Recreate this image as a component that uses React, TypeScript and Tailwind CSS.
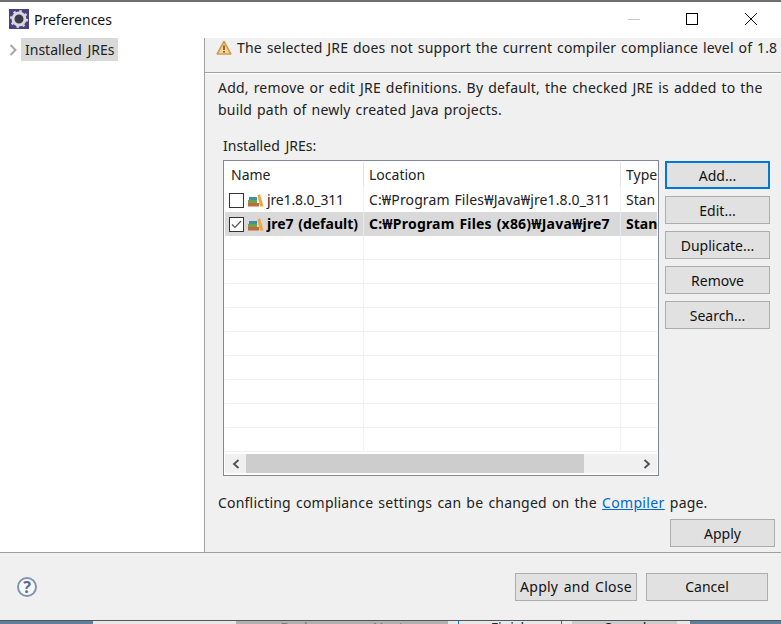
import React from "react";

const font = "font-['Noto_Sans','Noto_Sans_CJK_KR',sans-serif]";

const PushButton: React.FC<{ label: string; focused?: boolean; className?: string }> = ({ label, focused, className }) => (
  <button
    className={
      "flex items-center justify-center bg-[#e1e1e1] text-[14px] text-[#111] " +
      (focused ? "border-2 border-[#0078d7] " : "border border-[#adadad] ") +
      (className ?? "")
    }
  >
    {label}
  </button>
);

const JreIcon = () => (
  <svg width="16" height="13" viewBox="0 0 16 13" className="shrink-0">
    <rect x="1" y="3" width="8" height="3" fill="#3f8f9c" />
    <rect x="0" y="6" width="9" height="3" fill="#6da34d" />
    <rect x="0" y="9" width="11" height="3.5" fill="#c0693c" />
    <path d="M9.5 1.5 L12 0 L15.5 12.5 L12 12.5 Z" fill="#eaa83f" />
  </svg>
);

type Row = { name: string; location: string; type: string; checked?: boolean };

const rows: Row[] = [
  { name: "jre1.8.0_311", location: "C:₩Program Files₩Java₩jre1.8.0_311", type: "Stan" },
  { name: "jre7 (default)", location: "C:₩Program Files (x86)₩Java₩jre7", type: "Stan", checked: true },
];

const TableRow: React.FC<{ row?: Row }> = ({ row }) => (
  <div
    className={
      "flex h-[24px] shrink-0 items-center text-[14px] " +
      (row?.checked ? "bg-[#d9d9d9] font-bold text-black" : "text-[#222] ") +
      (row ? "" : " border-b border-[#f0f0f0]")
    }
  >
    <div className={"flex h-full w-[139px] shrink-0 items-center pl-[4px] border-r " + (row?.checked ? "border-[#e4e8f0]" : "border-[#eef1f7]")}>
      {row && (
        <>
          <span className="flex h-[15px] w-[15px] shrink-0 items-center justify-center border border-[#333] bg-white">
            {row.checked && (
              <svg width="11" height="9" viewBox="0 0 11 9">
                <path d="M1 4.5 L4 7.5 L10 1" fill="none" stroke="#555" strokeWidth="1.2" />
              </svg>
            )}
          </span>
          <span className="ml-[4px]"><JreIcon /></span>
          <span className={"ml-[3px] pb-px whitespace-nowrap " + (row.checked ? "[word-spacing:1px]" : "tracking-[-0.15px]")}>{row.name}</span>
        </>
      )}
    </div>
    <div
      className={
        "flex h-full w-[257px] shrink-0 items-center pl-[5px] pb-px whitespace-nowrap border-r [word-spacing:1px] " +
        (row?.checked ? "border-[#e4e8f0] tracking-[0.2px]" : "border-[#eef1f7] tracking-[0.12px]")
      }
    >
      {row?.location}
    </div>
    <div className="flex-1 overflow-hidden pl-[5px] pb-px whitespace-nowrap">{row?.type}</div>
  </div>
);

const PeekButton: React.FC<{ label: string; className: string }> = ({ label, className }) => (
  <div className={"flex h-full shrink-0 justify-center text-[14px] leading-[14px] " + className}>{label}</div>
);

const App = () => {
  const empties = Array.from({ length: 9 });
  return (
    <div className={"flex h-[624px] w-[781px] flex-col overflow-hidden bg-white text-[#222] [word-spacing:2px] " + font}>
      {/* title bar */}
      <div className="flex h-[38px] shrink-0 items-center border-t-2 border-[#6e6e6e] bg-white pb-[2px] pl-[9px]">
        <svg width="20" height="20" viewBox="0 0 20 20" className="shrink-0">
          <rect width="20" height="20" fill="#4b3f7f" />
          <circle cx="10" cy="10" r="6" fill="#3a3a4a" stroke="#d8d8de" strokeWidth="3" />
          <circle cx="10" cy="10" r="8" fill="none" stroke="#d8d8de" strokeWidth="2" strokeDasharray="2.5 3.8" />
        </svg>
        <span className="ml-[5px] text-[14px] text-[#111]">Preferences</span>
        <div className="ml-auto flex items-center">
          <div className="mr-[46px] h-px w-[12px] bg-[#c8c8c8]" />
          <div className="mr-[47px] h-[12px] w-[12px] border border-black" />
          <svg width="12" height="12" viewBox="0 0 12 12" className="mr-[24px]">
            <path d="M0 0 L12 12 M12 0 L0 12" stroke="#111" strokeWidth="1" />
          </svg>
        </div>
      </div>

      <div className="flex h-[514px] shrink-0">
        {/* tree */}
        <div className="w-[205px] shrink-0 border-r border-[#a0a0a0] bg-white">
          <div className="flex h-[23px] items-center">
            <svg width="8" height="12" viewBox="0 0 8 12" className="ml-[9px]">
              <path d="M1.5 1 L6.5 6 L1.5 11" fill="none" stroke="#a6a6a6" strokeWidth="2" />
            </svg>
            <span className="ml-[4px] flex h-full items-center bg-[#d9d9d9] px-[4px] text-[14px] text-[#222]">Installed JREs</span>
          </div>
        </div>

        {/* page */}
        <div className="flex min-w-0 flex-1 flex-col bg-[#f0f0f0]">
          <div className="flex h-[34px] shrink-0 items-start pl-[11px] text-[14px]">
            <svg width="16" height="16" viewBox="0 0 16 16" className="mt-[2px] shrink-0">
              <path d="M8 1.5 L14.8 14 L1.2 14 Z" fill="#f7d794" stroke="#cf9a55" strokeWidth="1.6" strokeLinejoin="round" />
              <rect x="7.2" y="5.5" width="1.6" height="4.5" fill="#7a4a10" />
              <rect x="7.2" y="11" width="1.6" height="1.6" fill="#7a4a10" />
            </svg>
            <span className="ml-[5px] h-[20px] whitespace-nowrap leading-[20px] tracking-[0.18px] [word-spacing:1px]">The selected JRE does not support the current compiler compliance level of 1.8</span>
          </div>
          <div className="h-px shrink-0 bg-[#a0a0a0]" />
          <div className="h-px shrink-0 bg-white" />
          <div className="ml-[13px] mt-[3px] w-[555px] text-[14px] leading-[22px] tracking-[0.2px] [word-spacing:1.1px]">
            Add, remove or edit JRE definitions. By default, the checked JRE is added to the build path of newly created Java projects.
          </div>
          <div className="ml-[18px] mt-[14px] h-[21px] text-[14px] leading-[21px]">Installed JREs:</div>
          <div className="ml-[18px] mt-[4px] flex">
            {/* table */}
            <div className="flex h-[316px] w-[436px] shrink-0 flex-col border border-[#82879b] bg-white p-px">
              <div className="flex h-[26px] shrink-0 items-center pb-px text-[14px]">
                <div className="flex h-full w-[139px] shrink-0 items-center pl-[6px] border-r border-[#e5e5e5]">Name</div>
                <div className="flex h-full w-[257px] shrink-0 items-center pl-[5px] border-r border-[#e5e5e5]">Location</div>
                <div className="pl-[5px]">Type</div>
              </div>
              <div className="flex min-h-0 flex-1 flex-col overflow-hidden">
                {rows.map((r) => (
                  <TableRow key={r.name} row={r} />
                ))}
                {empties.map((_, i) => (
                  <TableRow key={i} />
                ))}
              </div>
              {/* scrollbar */}
              <div className="mb-px flex h-[19px] shrink-0 items-center bg-[#f0f0f0]">
                <div className="flex w-[21px] shrink-0 items-center justify-center">
                  <svg width="8" height="10" viewBox="0 0 8 10">
                    <path d="M6.5 1 L2 5 L6.5 9" fill="none" stroke="#505050" strokeWidth="1.8" />
                  </svg>
                </div>
                <div className="h-full w-[338px] bg-[#cdcdcd]" />
                <div className="ml-auto flex w-[21px] shrink-0 items-center justify-center">
                  <svg width="8" height="10" viewBox="0 0 8 10">
                    <path d="M1.5 1 L6 5 L1.5 9" fill="none" stroke="#505050" strokeWidth="1.8" />
                  </svg>
                </div>
              </div>
            </div>
            {/* side buttons */}
            <div className="ml-[6px] mt-px flex flex-col gap-[7px]">
              <PushButton label="Add..." focused className="h-[28px] w-[105px]" />
              <PushButton label="Edit..." className="h-[28px] w-[105px]" />
              <PushButton label="Duplicate..." className="h-[28px] w-[105px]" />
              <PushButton label="Remove" className="h-[28px] w-[105px]" />
              <PushButton label="Search..." className="h-[28px] w-[105px]" />
            </div>
          </div>
          <div className="ml-[13px] mt-[16px] h-[22px] text-[14px] leading-[22px] tracking-[0.2px] [word-spacing:1.3px]">
            Conflicting compliance settings can be changed on the <span className="tracking-[0.35px] text-[#0066cc] underline">Compiler</span> page.
          </div>
          <div className="mt-[5px] flex justify-end pr-[6px]">
            <PushButton label="Apply" className="h-[28px] w-[105px]" />
          </div>
        </div>
      </div>

      {/* footer */}
      <div className="flex h-[68px] shrink-0 items-center border-t border-[#a0a0a0] bg-[#f0f0f0]">
        <div className="ml-[17px] flex h-[20px] w-[20px] items-center justify-center rounded-full border-2 border-[#8494ad] bg-[#f6f8fb] text-[16px] font-bold leading-none text-[#5a6a85]">?</div>
        <div className="ml-auto flex gap-[9px] pr-[13px]">
          <PushButton label="Apply and Close" className="h-[28px] w-[122px] tracking-[0.25px] [word-spacing:1.6px]" />
          <PushButton label="Cancel" className="h-[28px] w-[122px]" />
        </div>
      </div>

      {/* window behind */}
      <div className="flex h-[4px] shrink-0 overflow-hidden border-t border-[#555] bg-[#5f7f9f]">
        <div className="ml-[93px] flex h-full w-[597px] shrink-0 bg-[#e8e8e8]">
          <div className="w-[143px] shrink-0" />
          <PeekButton label="< Back" className="w-[106px] bg-[#b0b0b0] text-[#777]" />
          <PeekButton label="Next >" className="w-[106px] bg-[#b0b0b0] text-[#777]" />
          <div className="w-[10px] shrink-0" />
          <PeekButton label="Finish" className="w-[104px] border-x border-[#0078d7] text-[#222]" />
          <div className="w-[10px] shrink-0" />
          <PeekButton label="Cancel" className="w-[105px] bg-[#ccc] text-[#111]" />
        </div>
      </div>
    </div>
  );
};

export default App;
